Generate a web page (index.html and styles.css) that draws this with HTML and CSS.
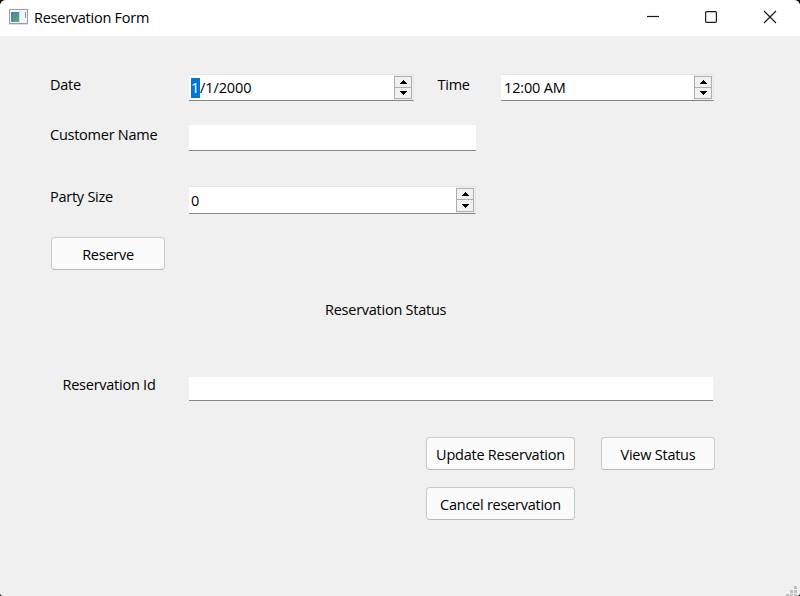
FILE: index.html
```
<!DOCTYPE html>
<html lang="en">
<head>
<meta charset="utf-8">
<title>Reservation Form</title>
<link rel="stylesheet" href="styles.css">
</head>
<body>
<div class="window">
  <header class="titlebar">
    <svg class="app-icon" width="20" height="17" viewBox="0 0 20 17">
      <defs><linearGradient id="screen" x1="0" y1="0" x2="1" y2="1"><stop offset="0" stop-color="#467baa"/><stop offset="1" stop-color="#58ad80"/></linearGradient></defs>
      <rect x=".5" y=".5" width="18" height="14" fill="#f4f4f5" stroke="#9b9fa4"/>
      <rect x="2" y="3" width="8" height="10" fill="url(#screen)"/>
      <path d="M10.5 2v12" stroke="#d5d7dc"/><path d="M16.5 3v6" stroke="#68a497"/>
      <path d="M0 15.5h19" stroke="#dedede"/>
    </svg>
    <span class="title">Reservation Form</span>
    <svg class="controls" width="134" height="20" viewBox="0 0 134 20" fill="none" stroke="#1a1a1a">
      <path d="M1 8.5h12" stroke-width="1.2"/>
      <rect x="59.6" y="3.6" width="10.8" height="10.8" rx="1.2" stroke-width="1.2"/>
      <path d="M118 3l12 12M130 3l-12 12" stroke-width="1.2"/>
    </svg>
  </header>
  <main class="form">
    <div class="row date-row">
      <label class="label">Date</label>
      <div class="field spin date"><span class="value date-value"><span class="selected">1</span>/1/2000</span>
        <span class="spinner"><i><svg width="9" height="5"><path d="M4 0h1v1h1v1h1v1h1v1H1V3h1V2h1V1h1z"/></svg></i><i><svg width="9" height="5"><path d="M1 0h7v1H7v1H6v1H5v1H4V3H3V2H2V1H1z"/></svg></i></span></div>
      <label class="label time-label">Time</label>
      <div class="field spin time"><span class="value time-value">12:00 AM</span>
        <span class="spinner"><i><svg width="9" height="5"><path d="M4 0h1v1h1v1h1v1h1v1H1V3h1V2h1V1h1z"/></svg></i><i><svg width="9" height="5"><path d="M1 0h7v1H7v1H6v1H5v1H4V3H3V2H2V1H1z"/></svg></i></span></div>
    </div>
    <div class="row name-row">
      <label class="label customer">Customer Name</label>
      <div class="field name"></div>
    </div>
    <div class="row party-row">
      <label class="label party">Party Size</label>
      <div class="field spin size"><span class="value size-value">0</span>
        <span class="spinner"><i><svg width="9" height="5"><path d="M4 0h1v1h1v1h1v1h1v1H1V3h1V2h1V1h1z"/></svg></i><i><svg width="9" height="5"><path d="M1 0h7v1H7v1H6v1H5v1H4V3H3V2H2V1H1z"/></svg></i></span></div>
    </div>
    <button class="button reserve">Reserve</button>
    <div class="status">Reservation Status</div>
    <div class="row id-row">
      <label class="label id-label">Reservation Id</label>
      <div class="field id"></div>
    </div>
    <div class="actions">
      <button class="button">Update Reservation</button>
      <button class="button">View Status</button>
      <button class="button">Cancel reservation</button>
    </div>
  </main>
  <svg class="grip" width="11" height="10" fill="#bfbfbf"><path d="M8 0h3v3H8zM4 4h3v3H4zM8 4h3v3H8zM0 8h3v2H0zM4 8h3v2H4zM8 8h3v2H8z"/></svg>
</div>
</body>
</html>
```
FILE: styles.css
```
* { box-sizing: border-box; }
body {
  margin: 0;
  background: #000;
  color: #000;
  font: 14.5px/20px "Open Sans", "Noto Sans", sans-serif;
  letter-spacing: -0.25px;
}
.window {
  position: relative;
  height: 596px;
  overflow: hidden;
  border-radius: 6px 6px 3px 3px;
  background: #f0f0f0;
}
.titlebar {
  display: flex;
  align-items: flex-start;
  height: 36px;
  padding: 8px 20px 0 9px;
  background: #fff;
}
.app-icon { margin-top: 1px; }
.title { margin-left: 5px; white-space: nowrap; }
.controls { margin-left: auto; }
.form { padding: 38px 50px 0; }
.row { display: flex; align-items: flex-start; }
.label { width: 139px; height: 20px; margin-top: 1px; white-space: nowrap; }
.field {
  height: 27px;
  background: #fff;
  border-bottom: 1px solid #868686;
}
.spin {
  display: flex;
  justify-content: space-between;
  border-top: 1px solid #e5e5e5;
  border-right: 1px solid #e5e5e5;
}
.value { padding: 3px 0 0 2px; }
.date-value { letter-spacing: -0.1px; }
.time-value { padding-left: 3px; letter-spacing: -0.15px; }
.size-value { padding-top: 4px; }
.selected {
  display: inline-block;
  width: 9px;
  height: 20px;
  background: #0078d7;
  color: #fff;
}
.spinner {
  display: grid;
  grid-template-rows: 12px 11px;
  width: 19px;
  height: 25px;
  padding: 1px 1px 1px 0;
  background: #f0f0f0;
}
.size .spinner { grid-template-rows: 12px 12px; height: 26px; }
.size .spinner i + i { padding-top: 1px; }
.spinner i {
  display: flex;
  align-items: center;
  justify-content: center;
  border: 1px solid #adadad;
  background: #f1f1f1;
}
.spinner i + i { border-top: 0; }
.spinner svg { display: block; }
.date { width: 225px; }
.time-label { width: 63px; margin-left: 24px; text-indent: -0.5px; }
.time { width: 213px; }
.name-row { margin-top: 24px; }
.name-row .label { margin-top: 0; }
.name { width: 287px; height: 26px; }
.party-row { margin-top: 35px; }
.size { width: 287px; height: 28px; }
.button {
  height: 33px;
  padding: 2px 0 0;
  border: 1px solid #cacaca;
  border-bottom-color: #b8b8b8;
  border-radius: 4px;
  background: #fbfbfb;
  color: #000;
  font: inherit;
  letter-spacing: inherit;
  white-space: nowrap;
}
.reserve { display: block; width: 114px; margin: 23px 0 0 1px; }
.status { margin: 30px 0 0 275px; }
.id-row { margin-top: 57px; }
.id-label { width: 127px; margin: -2px 0 0 12px; text-indent: 0.5px; }
.id { width: 524px; height: 24px; }
.actions {
  display: grid;
  grid-template-columns: 149px 114px;
  gap: 17px 26px;
  margin: 36px 0 0 376px;
}
.grip { position: absolute; right: 3px; bottom: 0; }
```
